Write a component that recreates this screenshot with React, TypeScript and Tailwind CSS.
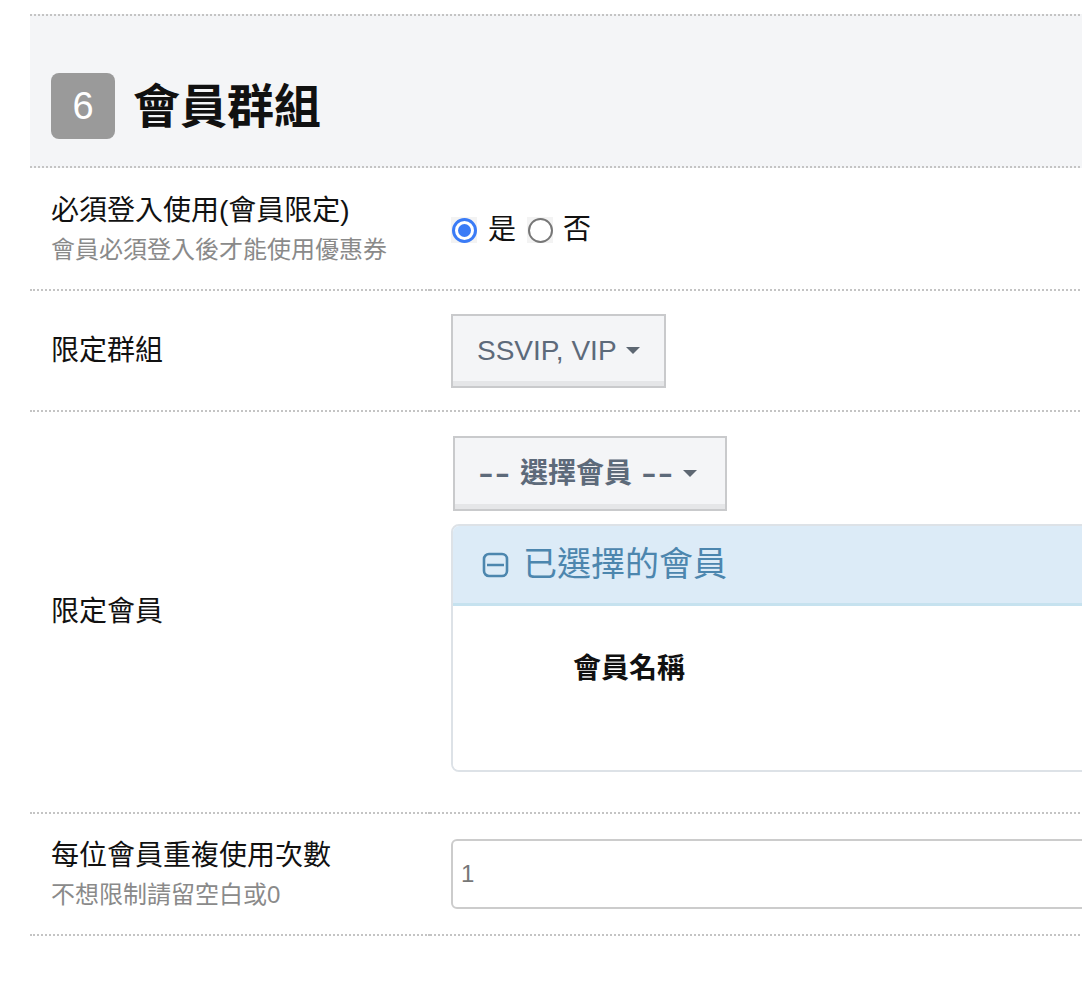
const font = '[font-family:"Liberation_Sans","Noto_Sans_CJK_TC",sans-serif]'

function Caret() {
  return <span className="inline-block w-0 h-0 border-x-[7px] border-x-transparent border-t-[7px] border-t-[#5d6772]" />
}

function Radio({ checked }: { checked: boolean }) {
  return (
    <span className="flex items-center justify-center w-[26px] h-[26px] bg-[#f3f3f3]">
      {checked ? (
        <span className="flex items-center justify-center w-[25px] h-[25px] rounded-full border-[3px] border-[#3a7bf6] bg-white">
          <span className="w-[13px] h-[13px] rounded-full bg-[#3a7bf6]" />
        </span>
      ) : (
        <span className="w-[25px] h-[25px] rounded-full border-2 border-[#777] bg-white" />
      )}
    </span>
  )
}

function Row({ label, sub, children, h }: { label: string; sub?: string; children: React.ReactNode; h?: string }) {
  return (
    <div className="flex">
      <div className={`w-[400px] shrink-0 pl-[21px] flex flex-col justify-center border-b-2 border-dotted border-[#c4c4c4] ${h ?? ''}`}>
        <div className="text-[28px] leading-[38px] text-[#111]">{label}</div>
        {sub && <div className="text-[24px] leading-[32px] text-[#8a8a8a] mt-[4px]">{sub}</div>}
      </div>
      <div className={`flex-1 pl-[21px] flex flex-col justify-center border-b-2 border-dotted border-[#c4c4c4] ${h ?? ''}`}>
        {children}
      </div>
    </div>
  )
}

const dash = 'inline-block w-[32px] text-center scale-x-[1.6] tracking-[1px]'

export default function App() {
  return (
    <div className={`w-full min-h-[982px] bg-white overflow-hidden ${font}`}>
      <div className="w-[1500px] pl-[30px] pt-[14px]">
        <div className="bg-[#f4f5f7] border-y-2 border-dotted border-[#c4c4c4] pt-[57px] pb-[27px] pl-[21px] flex items-center gap-[18px]">
          <div className="w-[64px] h-[66px] rounded-[8px] bg-[#9a9a9a] flex items-center justify-center text-white text-[38px]">
            6
          </div>
          <div className="text-[47px] font-bold text-[#111] leading-none">會員群組</div>
        </div>

        <Row label="必須登入使用(會員限定)" sub="會員必須登入後才能使用優惠券" h="h-[123px]">
          <div className="flex items-center text-[28px] text-[#111] mt-[3px]">
            <Radio checked />
            <span className="ml-[11px] mr-[11px]">是</span>
            <Radio checked={false} />
            <span className="ml-[10px]">否</span>
          </div>
        </Row>

        <Row label="限定群組" h="h-[121px]">
          <button className="self-start flex items-center gap-[9px] h-[74px] px-[24px] bg-[#f4f5f7] border-2 border-[#c9cacc] shadow-[inset_0_-5px_0_rgba(0,0,0,0.06)] text-[28px] text-[#5d6a7a]">
            <span>SSVIP, VIP</span>
            <Caret />
          </button>
        </Row>

        <Row label="限定會員">
          <div className="pt-[24px] pb-[40px]">
            <button className="ml-[2px] w-[274px] flex items-center h-[75px] pl-[24px] bg-[#f4f5f7] border-2 border-[#c9cacc] shadow-[inset_0_-5px_0_rgba(0,0,0,0.06)] text-[28px] font-semibold text-[#5d6a7a]">
              <span className={dash}>--</span>
              <span className="ml-[9px] mr-[10px]">選擇會員</span>
              <span className={dash}>--</span>
              <span className="ml-[9px] flex">
                <Caret />
              </span>
            </button>
            <div className="mt-[13px] border-2 border-[#dde2e7] rounded-[8px] overflow-hidden">
              <div className="h-[80px] bg-[#dcebf7] border-b-[3px] border-[#c6e2ef] flex items-center pl-[29px] gap-[14px] text-[34px] text-[#4c86ae]">
                <svg width="27" height="26" viewBox="0 0 27 26" fill="none" stroke="#4c86ae" strokeWidth="2.6">
                  <rect x="2" y="2" width="23" height="22" rx="5" />
                  <line x1="5" y1="13" x2="22" y2="13" />
                </svg>
                <span>已選擇的會員</span>
              </div>
              <div className="h-[164px] pl-[120px] pt-[43px] bg-white">
                <div className="text-[28px] leading-[40px] font-bold text-[#111]">會員名稱</div>
              </div>
            </div>
          </div>
        </Row>

        <Row label="每位會員重複使用次數" sub="不想限制請留空白或0" h="h-[122px]">
          <div className="h-[70px] border-2 border-[#cccccc] rounded-[6px] flex items-center pl-[8px] text-[24px] text-[#777]">
            1
          </div>
        </Row>
      </div>
    </div>
  )
}
